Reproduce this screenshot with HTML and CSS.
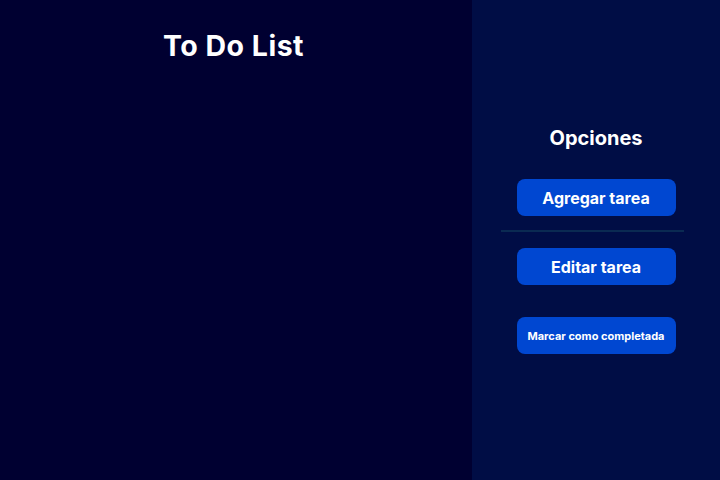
FILE: index.html
```html
<!DOCTYPE html>
<html lang="es">
<head>
<meta charset="utf-8">
<link rel="stylesheet" href="styles.css">
</head>
<body>
<div class="app">
  <main class="main">
    <h1 class="title">To Do List</h1>
  </main>
  <aside class="side">
    <h2 class="side-title">Opciones</h2>
    <button class="btn">Agregar tarea</button>
    <div class="divider"></div>
    <button class="btn">Editar tarea</button>
    <button class="btn btn-small">Marcar como completada</button>
  </aside>
</div>
</body>
</html>
```
FILE: styles.css
```css
html, body {
  margin: 0;
  padding: 0;
  height: 100%;
}
body {
  font-family: Inter, "Noto Sans", sans-serif;
  background: #000033;
  color: #ffffff;
}
.app {
  display: flex;
  width: 720px;
  height: 480px;
}
.main {
  width: 472px;
  background: #000031;
  display: flex;
  flex-direction: column;
  align-items: center;
  padding-right: 5px;
  box-sizing: border-box;
}
.title {
  margin: 28px 0 0 0;
  font-size: 28.5px;
  line-height: 36px;
  font-weight: 700;
  letter-spacing: 0.5px;
}
.side {
  flex: 1;
  background: #000d45;
  display: flex;
  flex-direction: column;
  align-items: center;
}
.side-title {
  margin: 126px 0 0 0;
  font-size: 20px;
  line-height: 24px;
  font-weight: 700;
}
.btn {
  width: 159px;
  height: 37px;
  border: none;
  border-radius: 8px;
  background: #0047d1;
  color: #ffffff;
  font-family: Inter, "Noto Sans", sans-serif;
  font-size: 16px;
  font-weight: 700;
  padding: 0;
  margin-top: 29px;
}
.divider {
  width: 183px;
  height: 2px;
  background: #0a2a52;
  margin: 14px 0 0 29px;
  align-self: flex-start;
}
.divider + .btn {
  margin-top: 16px;
}
.btn-small {
  font-size: 11px;
  margin-top: 32px;
}
```
